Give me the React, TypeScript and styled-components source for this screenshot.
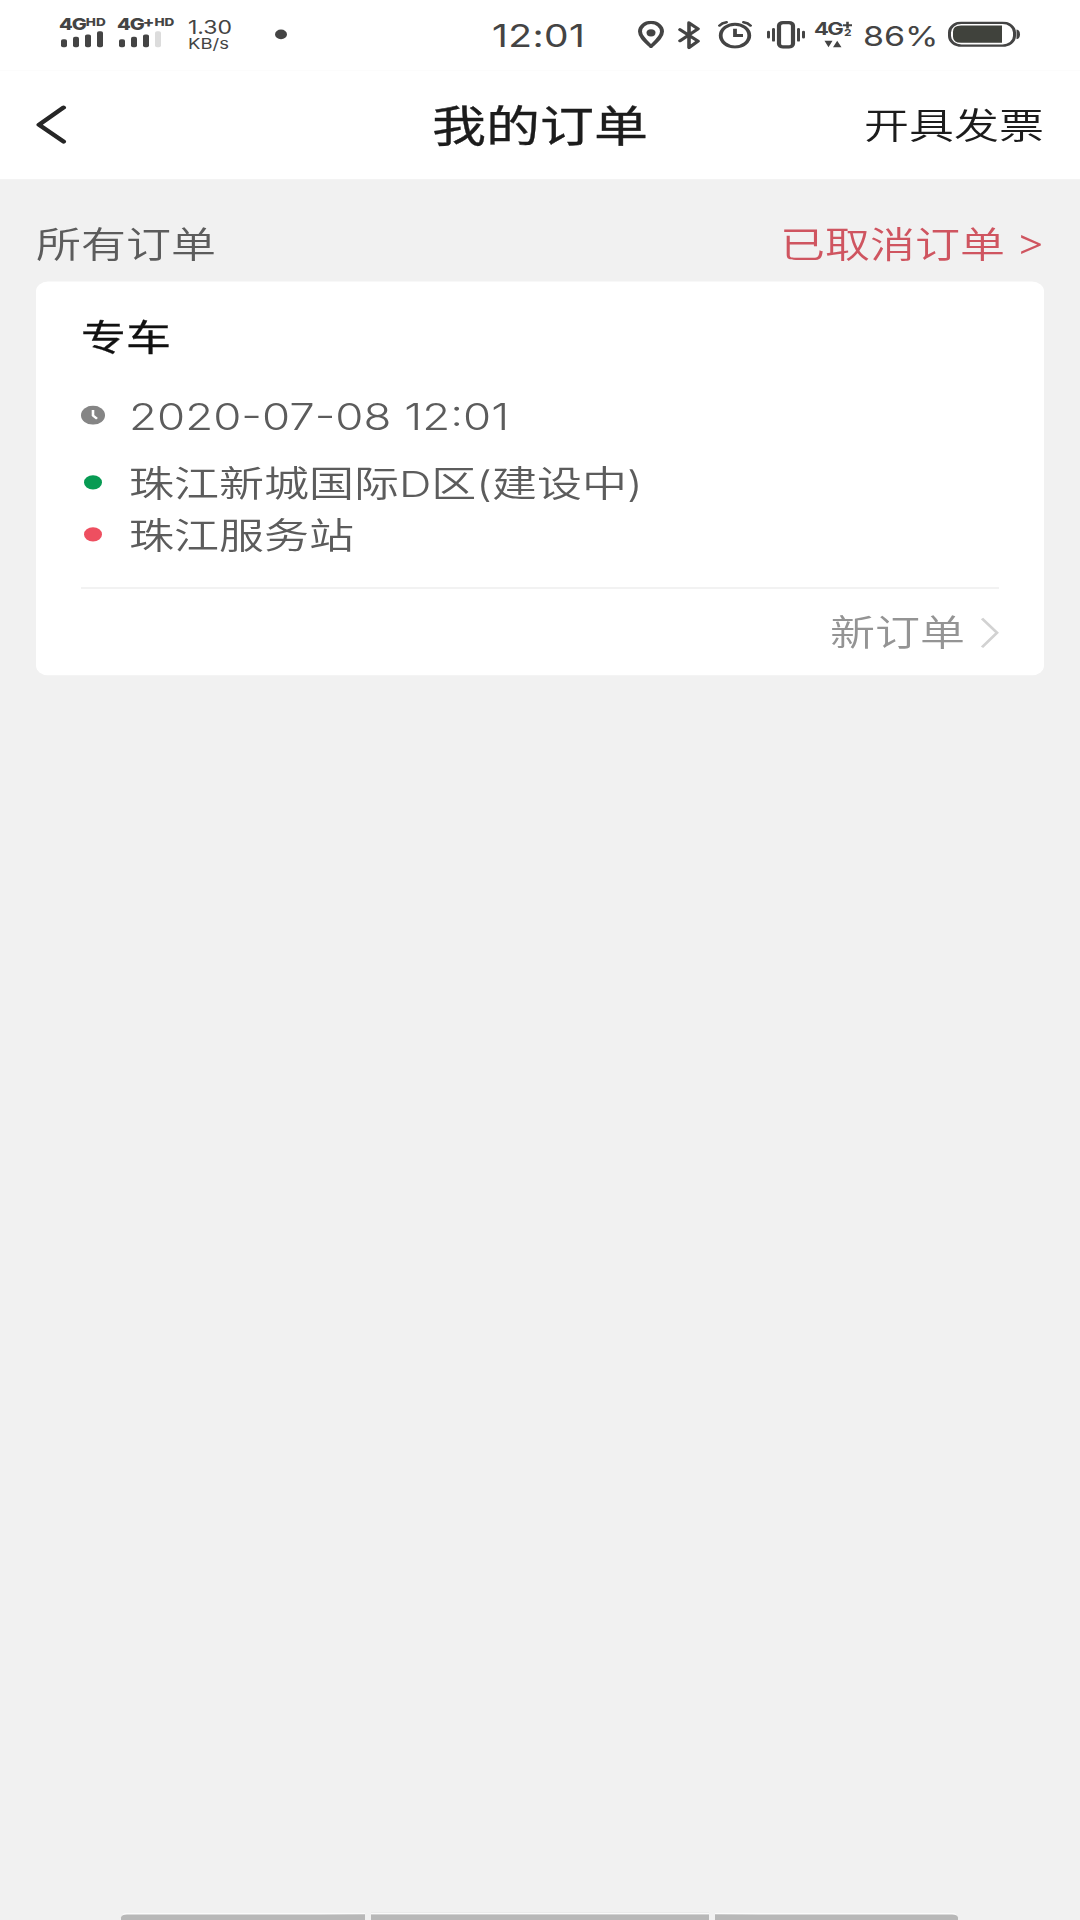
import React from 'react';
import styled, { createGlobalStyle } from 'styled-components';

const GlobalStyle = createGlobalStyle`
  * { box-sizing: border-box; }
  html, body { margin: 0; padding: 0; background: #f1f1f1; }
`;

const Viewport = styled.div`
  width: 1080px;
  height: 1920px;
  overflow: hidden;
  background: #f1f1f1;
`;

/* The phone's 1080x2400 surface, shown in a 1920px tall window. */
const Screen = styled.div`
  width: 1080px;
  height: 2400px;
  transform: scaleY(0.8);
  transform-origin: 0 0;
  display: flex;
  flex-direction: column;
  font-family: Inter, 'Noto Sans CJK SC', sans-serif;
  font-size: 45px;
  font-weight: 350;
  line-height: 60px;
  color: #5c5c5c;
  white-space: nowrap;
`;

const StatusBar = styled.div`
  height: 88px;
  flex: none;
  display: flex;
  align-items: flex-start;
  background: #fff;
  color: #444;
  font-weight: 400;
`;

const Slot = styled.div<{ $w: number; $ml?: number; $mt?: number }>`
  flex: none;
  width: ${p => p.$w}px;
  margin-left: ${p => p.$ml ?? 0}px;
  margin-top: ${p => p.$mt ?? 0}px;
  svg { display: block; }
`;

const Network = styled.div`
  display: flex;
  align-items: flex-start;
  height: 16px;
  font-size: 20px;
  line-height: 18px;
  font-weight: 800;
  letter-spacing: -1px;
`;

const NetworkTag = styled.span`
  font-size: 13.5px;
  line-height: 12px;
  letter-spacing: 0;
`;

const NetworkPlus = styled.span`
  font-size: 17px;
  line-height: 13px;
  letter-spacing: 0;
  margin-left: -1px;
`;

const SignalBars = styled.div`
  display: flex;
  align-items: flex-end;
  gap: 6px;
  height: 20px;
  margin: 1px 0 0 2px;
`;

const SignalBar = styled.i<{ $h: number; $off?: boolean }>`
  width: 6px;
  height: ${p => p.$h}px;
  border-radius: 2px;
  background: ${p => (p.$off ? '#dcdcdc' : '#444')};
`;

const Speed = styled.div<{ $size: number }>`
  font-size: ${p => p.$size}px;
  line-height: 20px;
`;

const DataNetwork = styled.div`
  display: flex;
  height: 21px;
  font-weight: 700;
  font-size: 22px;
  line-height: 20px;
  letter-spacing: -1.6px;
`;

const DataSim = styled.div`
  display: flex;
  flex-direction: column;
  align-items: center;
  margin-left: 1px;
  padding-top: 1px;
  font-size: 12px;
  line-height: 10px;
  letter-spacing: 0;
`;

const Dot = styled.div<{ $size: number; $color: string }>`
  width: ${p => p.$size}px;
  height: ${p => p.$size}px;
  border-radius: 50%;
  background: ${p => p.$color};
`;

const StatusText = styled.div<{ $size: number; $spacing?: number }>`
  font-size: ${p => p.$size}px;
  line-height: 40px;
  letter-spacing: ${p => p.$spacing ?? 0}px;
`;

const Header = styled.header`
  height: 136px;
  flex: none;
  display: grid;
  grid-template-columns: 1fr auto 1fr;
  align-items: center;
  padding: 4px 36px 0;
  background: #fff;
  color: #1c1c1c;
`;

const BackIcon = styled.svg`
  display: block;
  margin-top: -5px;
`;

const Title = styled.h1`
  margin: 0;
  font-size: 54px;
  line-height: 72px;
  font-weight: 400;
  -webkit-text-stroke: 0.4px currentColor;
`;

const InvoiceLink = styled.div`
  justify-self: end;
`;

const ListHead = styled.div`
  height: 128px;
  flex: none;
  display: flex;
  justify-content: space-between;
  padding: 52px 35px 0 36px;
`;

const CancelledLink = styled.div`
  color: #cf5560;
  word-spacing: -2px;
  font-feature-settings: 'case';
`;

const Card = styled.section`
  height: 492px;
  flex: none;
  margin: 0 36px;
  padding: 41px 45px 0;
  border-radius: 12px;
  background: #fff;
`;

const CardTitle = styled.h2`
  margin: 0;
  font-size: 45px;
  line-height: 60px;
  font-weight: 400;
  color: #111;
  -webkit-text-stroke: 0.4px currentColor;
`;

const Row = styled.div<{ $mt: number; $h: number }>`
  display: flex;
  align-items: center;
  height: ${p => p.$h}px;
  margin-top: ${p => p.$mt}px;
`;

const Marker = styled.div`
  width: 24px;
  margin-right: 24px;
  padding-bottom: 5px;
  display: flex;
  justify-content: center;
`;

const DateText = styled.span`
  font-size: 45.6px;
  font-weight: 350;
  font-feature-settings: 'case';
`;

const CardFooter = styled.div`
  display: flex;
  align-items: center;
  justify-content: flex-end;
  gap: 15px;
  height: 112px;
  margin-top: 34px;
  border-top: 2px solid #efefef;
  color: #949494;
`;

const NavHints = styled.div`
  margin-top: auto;
  display: flex;
  gap: 6px;
  height: 9px;
  padding: 0 122px 0 121px;
`;

const NavHint = styled.div<{ $grow: number; $radius: string }>`
  flex: ${p => p.$grow} 1 0;
  border-top: 2px solid #fafafa;
  border-radius: ${p => p.$radius};
  background: #b8b8b8;
`;

export default function App() {
  return (
    <Viewport>
      <GlobalStyle />
      <Screen>
        <StatusBar>
          <Slot $w={46} $ml={59} $mt={22}>
            <Network>4G<NetworkTag>HD</NetworkTag></Network>
            <SignalBars>
              <SignalBar $h={10} /><SignalBar $h={13} /><SignalBar $h={16} /><SignalBar $h={20} />
            </SignalBars>
          </Slot>
          <Slot $w={60} $ml={12} $mt={22}>
            <Network>4G<NetworkPlus>+</NetworkPlus><NetworkTag>HD</NetworkTag></Network>
            <SignalBars>
              <SignalBar $h={10} /><SignalBar $h={13} /><SignalBar $h={16} /><SignalBar $h={20} $off />
            </SignalBars>
          </Slot>
          <Slot $w={50} $ml={11} $mt={24}>
            <Speed $size={23}>1.30</Speed>
            <Speed $size={18.5}>KB/s</Speed>
          </Slot>
          <Slot $w={12} $ml={37} $mt={37}><Dot $size={12} $color="#444" /></Slot>
          <Slot $w={100} $ml={205} $mt={25}><StatusText $size={39} $spacing={0.4}>12:01</StatusText></Slot>
          <Slot $w={26} $ml={46} $mt={26}>
            <svg width="26" height="35" viewBox="0 0 26 35" fill="none" stroke="#444" strokeWidth="4">
              <path d="M13 32C8 26 2 20 2 13.500A11 11.500 0 0 1 24 13.500C24 20 18 26 13 32Z" strokeLinejoin="round" />
              <circle cx="13" cy="15" r="4.500" fill="#444" stroke="none" />
            </svg>
          </Slot>
          <Slot $w={22} $ml={14} $mt={26}>
            <svg width="22" height="36" viewBox="0 0 22 36" fill="none" stroke="#444" strokeWidth="3.600" strokeLinecap="round" strokeLinejoin="round">
              <path d="M2 11L20 25.500L11 33.500V2.500L20 10L2 25" />
            </svg>
          </Slot>
          <Slot $w={34} $ml={18} $mt={26}>
            <svg width="34" height="35" viewBox="0 0 34 35" fill="none" stroke="#444" strokeWidth="3.800">
              <circle cx="17" cy="18.500" r="14.300" />
              <path d="M17 10V18.500H25" />
              <path d="M1.500 6Q4 2.500 8.500 1.800M25.500 1.800Q30 2.500 32.500 6" strokeLinecap="round" strokeWidth="3" />
            </svg>
          </Slot>
          <Slot $w={38} $ml={15} $mt={26}>
            <svg width="38" height="35" viewBox="0 0 38 35" fill="none" stroke="#444" strokeLinecap="round">
              <rect x="12" y="2.200" width="14" height="30.500" rx="4" strokeWidth="4.200" />
              <path d="M1.500 14V20.500M6.500 10.500V24.500M31.500 10.500V24.500M36.500 14V20.500" strokeWidth="3" />
            </svg>
          </Slot>
          <Slot $w={38} $ml={9} $mt={26}>
            <DataNetwork>
              4G
              <DataSim>
                <svg width="9" height="9" viewBox="0 0 9 9" stroke="#444" strokeWidth="2.600">
                  <path d="M0 4.500H9M4.500 0V9" />
                </svg>
                2
              </DataSim>
            </DataNetwork>
            <svg width="38" height="14" viewBox="0 0 38 14" fill="#444">
              <path d="M10.500 4H18.500L14.500 12Z M19 12H27.500L23.200 4Z" />
            </svg>
          </Slot>
          <Slot $w={72} $ml={11} $mt={25}><StatusText $size={34}>86%</StatusText></Slot>
          <Slot $w={74} $ml={13} $mt={27}>
            <svg width="74" height="32" viewBox="0 0 74 32">
              <rect x="1.500" y="1.500" width="65" height="28.500" rx="12" fill="none" stroke="#444" strokeWidth="3" />
              <path d="M13 5H54V26.500H13Q5 26.500 5 19V12.500Q5 5 13 5Z" fill="#40423c" />
              <path d="M68.500 10Q72 11 72 16Q72 21 68.500 22Z" fill="#444" />
            </svg>
          </Slot>
        </StatusBar>

        <Header>
          <BackIcon width="32" height="52" viewBox="0 0 32 52" fill="none" stroke="#262626" strokeWidth="5" strokeLinecap="round" strokeLinejoin="round">
            <path d="M27.500 4.500L3 26L27.500 47" />
          </BackIcon>
          <Title>我的订单</Title>
          <InvoiceLink>开具发票</InvoiceLink>
        </Header>

        <ListHead>
          <div>所有订单</div>
          <CancelledLink>已取消订单 &gt;</CancelledLink>
        </ListHead>

        <Card>
          <CardTitle>专车</CardTitle>
          <Row $mt={38} $h={60}>
            <Marker>
              <svg width="24" height="24" viewBox="0 0 24 24">
                <circle cx="12" cy="12" r="12" fill="#858585" />
                <path d="M12 5.500V12.500L16 16.500" fill="none" stroke="#fff" strokeWidth="2.600" />
              </svg>
            </Marker>
            <DateText>2020-07-08 12:01</DateText>
          </Row>
          <Row $mt={24} $h={60}>
            <Marker><Dot $size={18} $color="#079b53" /></Marker>
            珠江新城国际D区(建设中)
          </Row>
          <Row $mt={5} $h={60}>
            <Marker><Dot $size={18} $color="#ee4f60" /></Marker>
            珠江服务站
          </Row>
          <CardFooter>
            新订单
            <svg width="19" height="40" viewBox="0 0 19 40" fill="none" stroke="#d2d2d2" strokeWidth="3">
              <path d="M2 2L17 20L2 38" />
            </svg>
          </CardFooter>
        </Card>

        <NavHints>
          <NavHint $grow={244} $radius="6px 0 0 0" />
          <NavHint $grow={338} $radius="0" />
          <NavHint $grow={243} $radius="0 6px 0 0" />
        </NavHints>
      </Screen>
    </Viewport>
  );
}
